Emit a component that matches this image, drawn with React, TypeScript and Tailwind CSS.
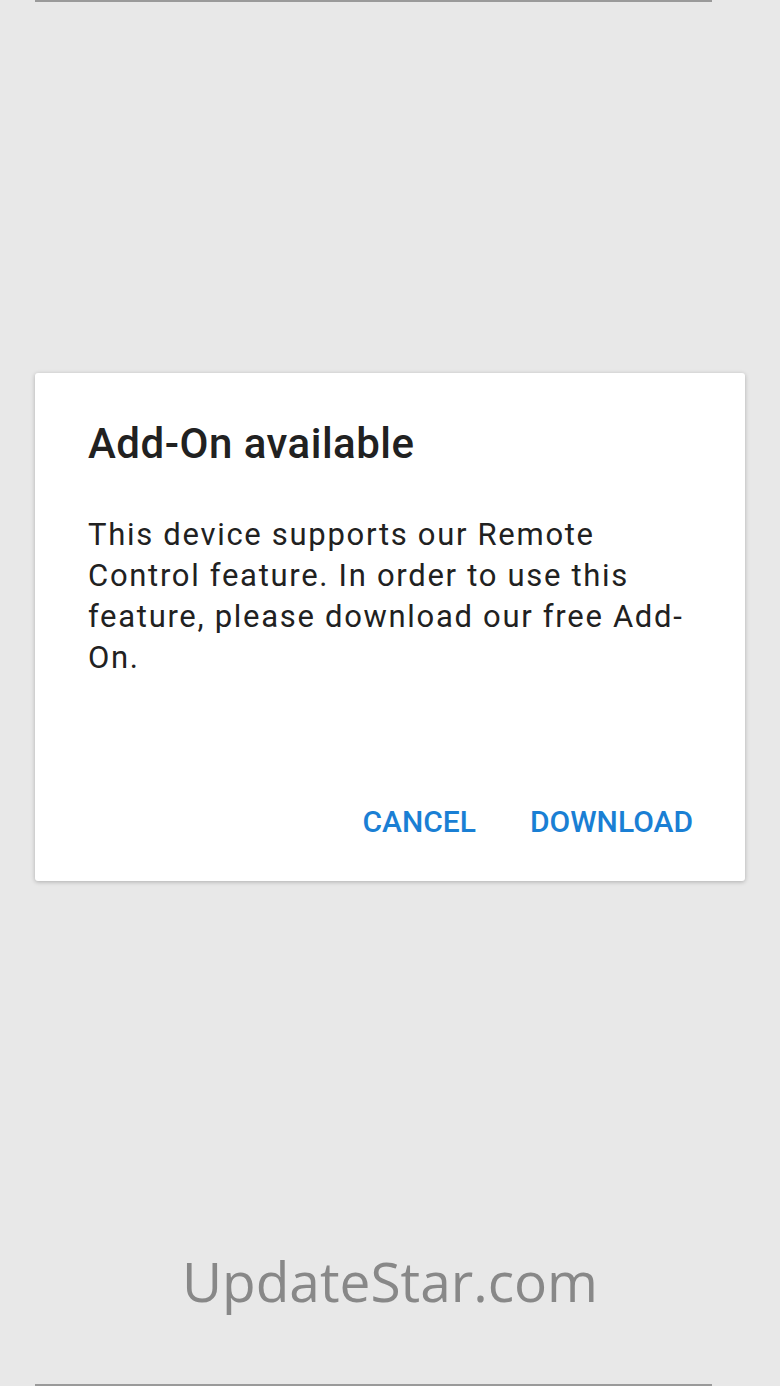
import React from "react";

export default function App() {
  return (
    <div className="relative w-[780px] h-[1386px] bg-[#e8e8e8] overflow-hidden flex flex-col items-center" style={{ fontFamily: "Roboto, 'Noto Sans', sans-serif" }}>
      <div className="absolute top-0 left-[35px] w-[677px] h-[2px] bg-[#9a9a9a]" />
      <div className="absolute bottom-0 left-[35px] w-[677px] h-[2px] bg-[#9a9a9a]" />
      <div className="mt-[373px] w-[710px] h-[508px] bg-white rounded-[3px] shadow-[0_1px_4px_rgba(0,0,0,0.25)] flex flex-col pl-[53px] pr-[40px]">
        <div className="mt-[46px] text-[42px] leading-[50px] font-medium text-[#212121] tracking-[0.5px] whitespace-nowrap">Add-On available</div>
        <div className="mt-[45px] text-[31px] leading-[41px] text-[#212121] tracking-[1.7px] whitespace-nowrap">
          This device supports our Remote
          <br />
          Control feature. In order to use this
          <br />
          feature, please download our free Add-
          <br />
          On.
        </div>
        <div className="mt-auto mb-[42px] pr-[12px] flex justify-end gap-[54px] text-[30px] font-medium text-[#1a7fd4] leading-[34px]">
          <span>CANCEL</span>
          <span>DOWNLOAD</span>
        </div>
      </div>
      <div className="mt-auto mb-[70px] text-[55px] leading-[70px] text-[#888888]" style={{ fontFamily: "'Open Sans', sans-serif" }}>UpdateStar.com</div>
    </div>
  );
}
